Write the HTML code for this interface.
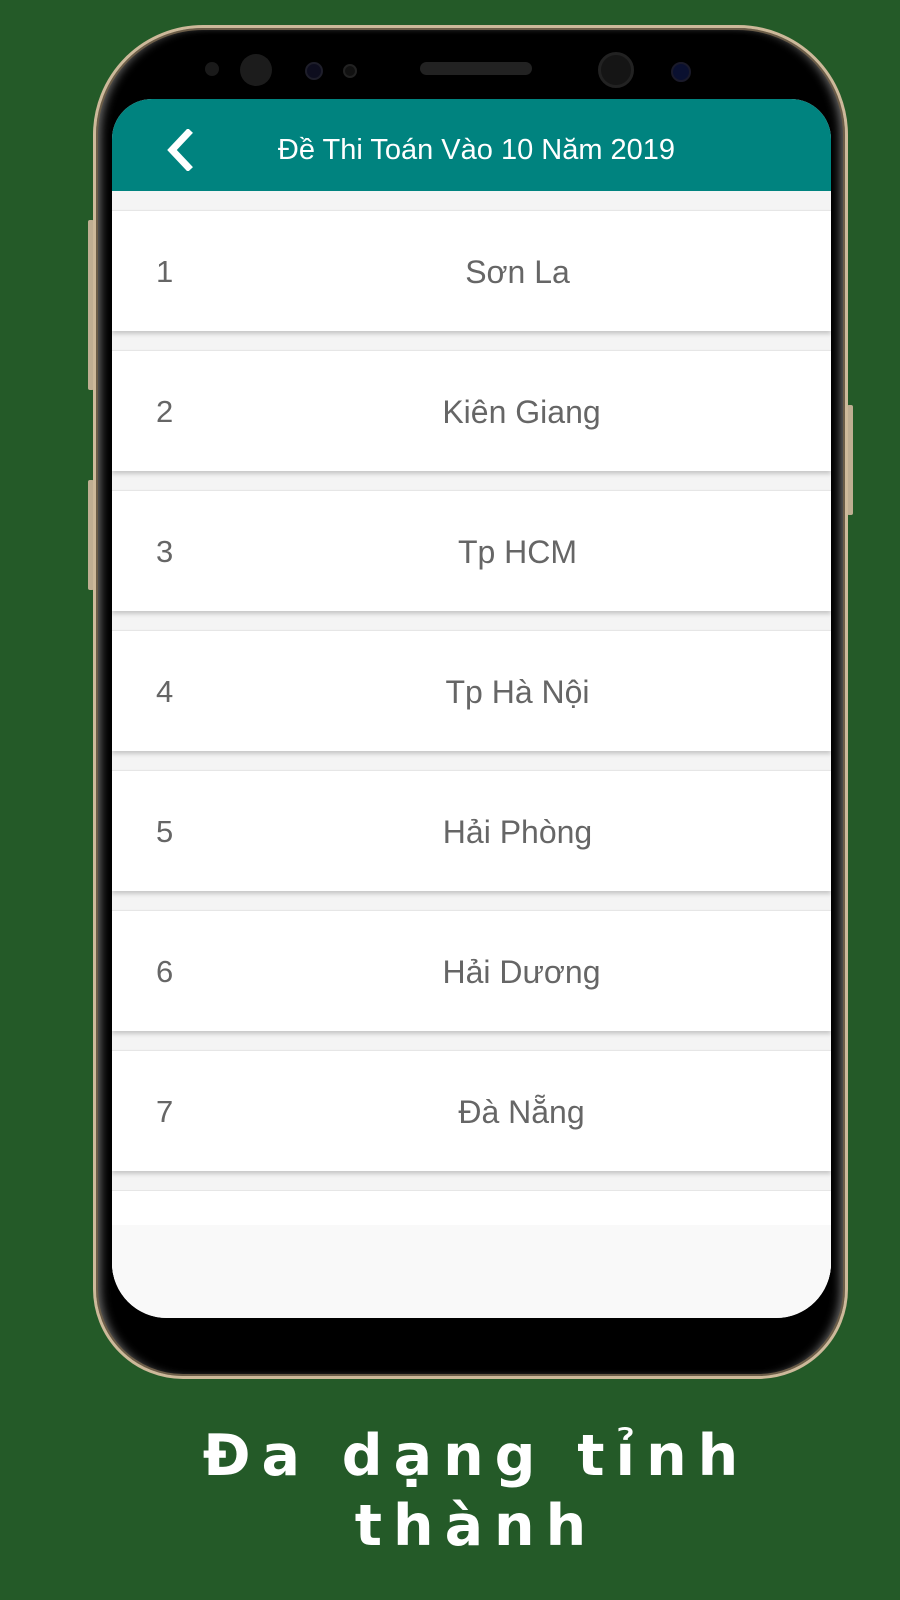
<!DOCTYPE html>
<html><head><meta charset="utf-8"><style>
*{margin:0;padding:0;box-sizing:border-box}
body{width:900px;height:1600px;background:#245a28;position:relative;overflow:hidden;font-family:"Liberation Sans",sans-serif}
.phone{position:absolute;left:93px;top:25px;width:755px;height:1354px;border-radius:110px 110px 90px 90px;background:#000;border:3px solid #cdb99a;box-shadow:inset 0 0 0 2px #6b5d48,inset 8px 0 10px -4px #777,inset -8px 0 10px -4px #777}
.btn{position:absolute;background:#bfae92;width:6px;border-radius:2px}
.screen{position:absolute;left:112px;top:99px;width:719px;height:1219px;background:#f4f4f4;border-radius:40px 40px 55px 55px;overflow:hidden}
.hdr{position:absolute;left:0;top:8px;width:719px;height:87px;color:#fff;font-size:29px;text-align:center;line-height:87px;padding-left:10px}
.row{position:absolute;left:0;width:719px;height:121px;background:#fff;box-shadow:0 3px 4px rgba(0,0,0,.18);border-top:1px solid #e6e6e6}
.row .n{position:absolute;left:44px;top:0;line-height:121px;font-size:31px;color:#666}
.row .t{position:absolute;left:0;right:0;text-align:center;padding-left:100px;line-height:123px;font-size:32px;color:#666}
.cap{position:absolute;left:0;width:920px;padding-left:32px;text-align:center;color:#fff;font-family:"DejaVu Sans",sans-serif;font-weight:bold;font-size:57px;letter-spacing:11px}
</style></head><body>
<div class="btn" style="left:88px;top:220px;height:170px"></div>
<div class="btn" style="left:88px;top:480px;height:110px"></div>
<div class="btn" style="left:847px;top:405px;height:110px"></div>
<div class="phone"></div>
<div style="position:absolute;left:205px;top:62px;width:14px;height:14px;border-radius:50%;background:#1a1a1a"></div>
<div style="position:absolute;left:240px;top:54px;width:32px;height:32px;border-radius:50%;background:#1c1c1c"></div>
<div style="position:absolute;left:305px;top:62px;width:18px;height:18px;border-radius:50%;background:#0d0d1e;border:2px solid #1e1e2a"></div>
<div style="position:absolute;left:343px;top:64px;width:14px;height:14px;border-radius:50%;background:#111;border:2px solid #222"></div>
<div style="position:absolute;left:420px;top:62px;width:112px;height:13px;border-radius:7px;background:#222"></div>
<div style="position:absolute;left:598px;top:52px;width:36px;height:36px;border-radius:50%;background:#151515;border:3px solid #222"></div>
<div style="position:absolute;left:671px;top:62px;width:20px;height:20px;border-radius:50%;background:#0a1030;border:2px solid #1a1a2a"></div>
<div class="screen">
<div style="position:absolute;left:0;top:0;width:719px;height:92px;background:#00837f"></div>
<div class="hdr">Đề Thi Toán Vào 10 Năm 2019</div>
<svg style="position:absolute;left:52px;top:30px" width="30" height="42" viewBox="0 0 30 42"><path d="M24 4 L8 21 L24 38" fill="none" stroke="#fff" stroke-width="7" stroke-linecap="square"/></svg>
<div class="row" style="top:111px"><span class="n">1</span><span class="t" style="padding-left:92px">Sơn La</span></div>
<div class="row" style="top:251px"><span class="n">2</span><span class="t">Kiên Giang</span></div>
<div class="row" style="top:391px"><span class="n">3</span><span class="t" style="padding-left:92px">Tp HCM</span></div>
<div class="row" style="top:531px"><span class="n">4</span><span class="t" style="padding-left:92px">Tp Hà Nội</span></div>
<div class="row" style="top:671px"><span class="n">5</span><span class="t" style="padding-left:92px">Hải Phòng</span></div>
<div class="row" style="top:811px"><span class="n">6</span><span class="t">Hải Dương</span></div>
<div class="row" style="top:951px"><span class="n">7</span><span class="t">Đà Nẵng</span></div>
<div class="row" style="top:1091px;box-shadow:none"></div>
<div style="position:absolute;left:0;top:1126px;width:719px;height:100px;background:#f9f9f9"></div>
</div>
<div class="cap" style="top:1423px">Đa dạng tỉnh</div>
<div class="cap" style="top:1493px">thành</div>
</body></html>
